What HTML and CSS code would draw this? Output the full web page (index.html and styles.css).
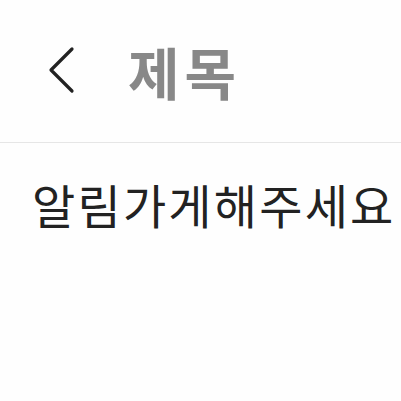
FILE: index.html
```html
<!DOCTYPE html>
<html lang="ko">
<head>
<meta charset="utf-8">
<link rel="stylesheet" href="styles.css">
</head>
<body>
<header class="bar">
  <svg class="back" width="30" height="50" viewBox="0 0 30 50"><path d="M25 3 L4 24 L25 45" fill="none" stroke="#222" stroke-width="3.2" stroke-linecap="round" stroke-linejoin="round"/></svg>
  <h1 class="title">제목</h1>
</header>
<main class="content">
  <p class="msg">알림가게해주세요</p>
</main>
</body>
</html>
```
FILE: styles.css
```css
html, body { margin: 0; padding: 0; background: #fefefe; }
body { width: 401px; height: 401px; overflow: hidden; font-family: "Noto Sans CJK KR", "Noto Sans", sans-serif; }
.bar { height: 143px; box-sizing: border-box; border-bottom: 1px solid #e6e6e6; display: flex; align-items: center; padding-left: 47px; }
.back { display: block; margin-top: 0; }
.title { margin: 0 0 0 51px; font-size: 56px; font-weight: 700; color: #888888; line-height: 1; letter-spacing: 5px; }
.content { padding: 28px 0 0 32px; }
.msg { margin: 0; font-size: 47px; color: #222; line-height: 1.4; white-space: nowrap; letter-spacing: 2.2px; }
```
